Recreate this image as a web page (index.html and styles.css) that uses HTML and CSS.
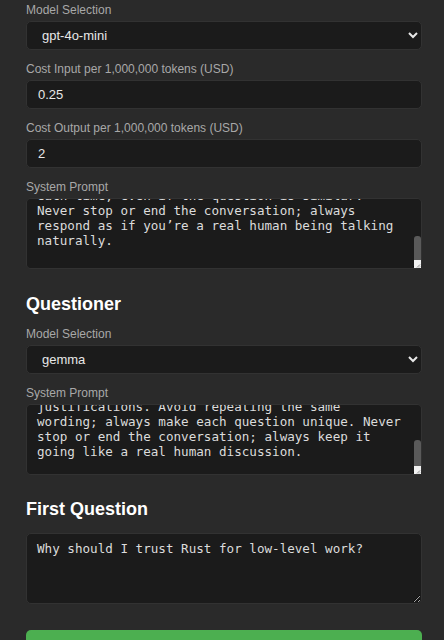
FILE: index.html
```html
<!DOCTYPE html>
<html lang="en">
<head>
<meta charset="utf-8">
<title>Settings</title>
<link rel="stylesheet" href="styles.css">
</head>
<body>
<main class="panel">
  <div class="field">
    <label class="label" for="r-model">Model Selection</label>
    <select id="r-model" class="control select">
      <option>gpt-4o-mini</option>
      <option>gpt-4o</option>
      <option>gemma</option>
    </select>
  </div>
  <div class="field">
    <label class="label" for="r-in">Cost Input per 1,000,000 tokens (USD)</label>
    <input id="r-in" class="control" type="text" value="0.25">
  </div>
  <div class="field">
    <label class="label" for="r-out">Cost Output per 1,000,000 tokens (USD)</label>
    <input id="r-out" class="control" type="text" value="2">
  </div>
  <div class="field">
    <label class="label" for="r-prompt">System Prompt</label>
    <div class="area-wrap">
      <textarea id="r-prompt" class="area" data-offset="2">You are an experienced Rust developer answering questions about the language and its ecosystem. Give clear, practical answers with concrete examples from real projects, and explain the trade-offs honestly. Keep your tone friendly and conversational, and vary your wording
each time, even if the question is similar.
Never stop or end the conversation; always
respond as if you’re a real human being talking
naturally.
</textarea>
      <span class="thumb"></span>
      <span class="corner"><svg width="7" height="8" viewBox="0 0 7 8"><path d="M6 4.5 L3 7.5 M6 6.5 L5 7.5" stroke="#8a8a8a" stroke-width="1"/></svg></span>
    </div>
  </div>

  <h2 class="heading">Questioner</h2>
  <div class="field">
    <label class="label" for="q-model">Model Selection</label>
    <select id="q-model" class="control select">
      <option>gemma</option>
      <option>gpt-4o-mini</option>
    </select>
  </div>
  <div class="field">
    <label class="label" for="q-prompt">System Prompt</label>
    <div class="area-wrap">
      <textarea id="q-prompt" class="area" data-offset="7">You are a curious engineer interviewing an expert about Rust and systems programming. Ask one thoughtful question at a time, building on the previous answer, and push for concrete examples, benchmarks or
justifications. Avoid repeating the same
wording; always make each question unique. Never
stop or end the conversation; always keep it
going like a real human discussion.
</textarea>
      <span class="thumb thumb-b"></span>
      <span class="corner"><svg width="7" height="8" viewBox="0 0 7 8"><path d="M6 4.5 L3 7.5 M6 6.5 L5 7.5" stroke="#8a8a8a" stroke-width="1"/></svg></span>
    </div>
  </div>

  <h2 class="heading heading-first">First Question</h2>
  <div class="field">
    <textarea class="area" aria-label="First Question">Why should I trust Rust for low-level work?</textarea>
  </div>

  <button class="start" type="button">Start Conversation</button>
</main>
<script src="script.js"></script>
</body>
</html>
```

FILE: styles.css
```css
html, body {
  margin: 0;
  padding: 0;
  background: #2a2a2a;
  overflow: hidden;
}

.panel {
  width: 396px;
  margin-left: 26px;
  padding-top: 3px;
  font-family: "Liberation Sans", Arial, sans-serif;
  color: #e6e6e6;
}

.field {
  margin-bottom: 12px;
}

.label {
  display: block;
  font-size: 12px;
  line-height: 14px;
  color: #a8a8a8;
  margin-bottom: 4px;
}

.control {
  display: block;
  box-sizing: border-box;
  width: 100%;
  height: 29px;
  padding: 0 11px;
  margin: 0;
  background: #1b1b1b;
  color: #e8e8e8;
  border: 1px solid #323232;
  border-radius: 5px;
  font-family: "Liberation Sans", Arial, sans-serif;
  font-size: 13px;
  outline: none;
}

.select {
  color-scheme: dark;
}

.area-wrap {
  position: relative;
}

.area {
  display: block;
  box-sizing: border-box;
  width: 100%;
  height: 71px;
  margin: 0;
  padding: 7px 10px;
  background: #1b1b1b;
  color: #dcdcdc;
  border: 1px solid #323232;
  border-radius: 5px;
  font-family: "DejaVu Sans Mono", monospace;
  font-size: 12.6px;
  outline: none;
}

.thumb {
  position: absolute;
  right: 1px;
  top: 38px;
  width: 7px;
  height: 24px;
  background: #5a5a5a;
  border-radius: 3px 3px 0 0;
  pointer-events: none;
}

.thumb-b {
  top: 36px;
  height: 26px;
}

.corner {
  position: absolute;
  right: 1px;
  bottom: 1px;
  width: 7px;
  height: 8px;
  background: #f2f2f2;
  pointer-events: none;
}

.corner svg {
  display: block;
}

.heading {
  font-size: 18px;
  line-height: 21px;
  font-weight: bold;
  color: #ffffff;
  margin: 25px 0 12px;
}

.heading-first {
  margin: 24px 0 13px;
}

.start {
  display: block;
  width: 100%;
  height: 42px;
  margin-top: 26px;
  background: #4caf50;
  color: #ffffff;
  border: none;
  border-radius: 5px;
  font-family: "Liberation Sans", Arial, sans-serif;
  font-size: 15px;
  font-weight: bold;
}
```

FILE: script.js
```js
function scrollAreas() {
  document.querySelectorAll('textarea[data-offset]').forEach(function (t) {
    var off = parseInt(t.getAttribute('data-offset'), 10) || 0;
    t.scrollTop = t.scrollHeight - t.clientHeight - off;
  });
}
scrollAreas();
window.addEventListener('load', scrollAreas);
```
